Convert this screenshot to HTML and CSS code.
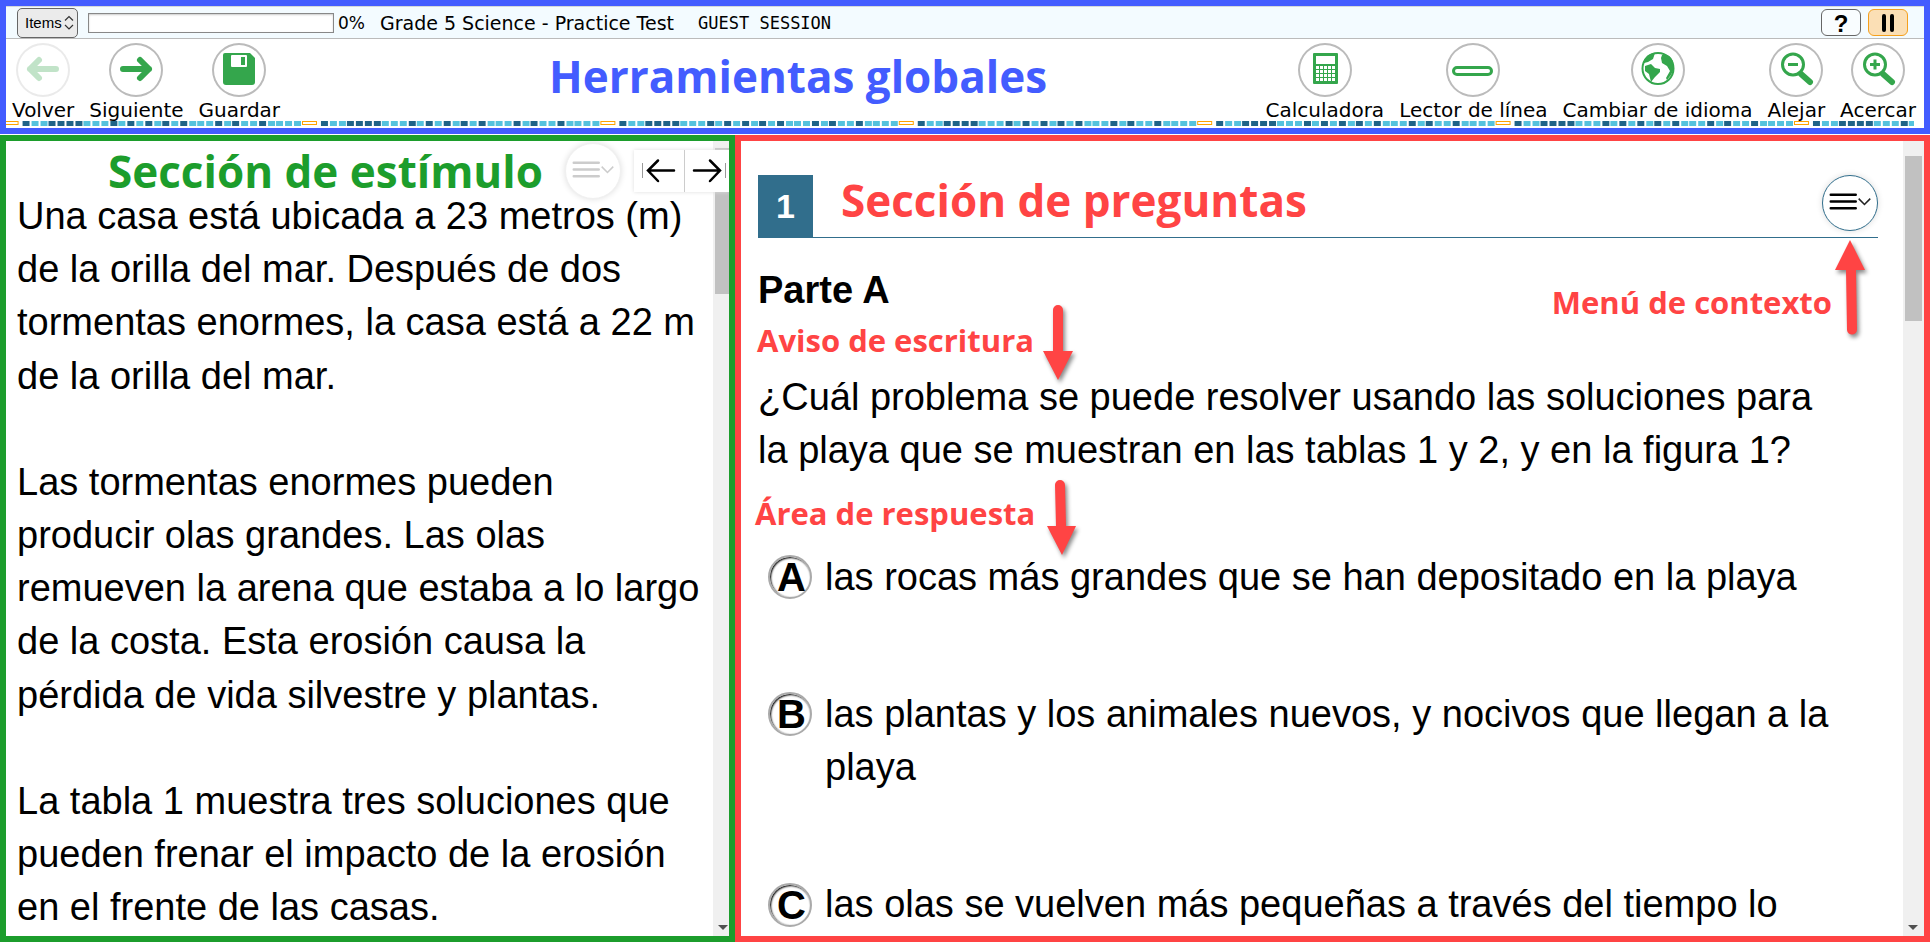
FILE: index.html
```html
<!DOCTYPE html>
<html lang="es">
<head>
<meta charset="utf-8">
<title>Grade 5 Science - Practice Test</title>
<link rel="stylesheet" href="styles.css">
</head>
<body>
<header class="global">
  <div class="status">
    <select class="items" aria-label="Items"><option>Items</option></select>
    <svg class="updown" width="10" height="16" viewBox="0 0 10 16" aria-hidden="true"><path d="M1 5.500 5 1.500 9 5.500M1 10 5 14 9 10"/></svg>
    <div class="progress" role="progressbar" aria-valuenow="0" aria-label="Progreso"></div>
    <span class="percent">0%</span>
    <span class="test-name">Grade 5 Science - Practice Test</span>
    <span class="session">GUEST SESSION</span>
    <button class="mini help" type="button">?</button>
    <button class="mini pause" type="button" aria-label="Pausa"><svg width="14" height="18" viewBox="0 0 14 18"><path d="M3 2V16M11 2V16"/></svg></button>
  </div>
  <nav class="toolbar">
    <button class="tool" type="button" disabled><span class="ring"><svg viewBox="0 0 54 54"><path class="arrow" d="M40 26H14M23 17 14 26 23 35"/></svg></span>Volver</button>
    <button class="tool" type="button"><span class="ring"><svg viewBox="0 0 54 54"><path class="arrow" d="M14 26H40M31 17 40 26 31 35"/></svg></span>Siguiente</button>
    <button class="tool" type="button"><span class="ring"><svg viewBox="0 0 54 54"><path class="fill" d="M13 10H38L43 15V39Q43 42 40 42H14Q11 42 11 39V12Q11 10 13 10Z"/><rect class="hole" x="19" y="12" width="16" height="12" rx="1"/><rect class="fill" x="29" y="14" width="4" height="8"/></svg></span>Guardar</button>
    <h1 class="global-title">Herramientas globales</h1>
    <button class="tool" type="button"><span class="ring"><svg viewBox="0 0 54 54"><rect class="fill" x="15" y="10" width="25" height="31" rx="1"/><rect class="hole" x="18" y="13" width="19" height="8"/><path class="keys" d="M18 24.500H37M18 28.500H37M18 32.500H37M18 36.500H37" stroke-dasharray="3 1"/></svg></span>Calculadora</button>
    <button class="tool" type="button"><span class="ring"><svg viewBox="0 0 54 54"><rect class="line" x="7.500" y="24.500" width="38" height="7" rx="3.500"/></svg></span>Lector de línea</button>
    <button class="tool" type="button"><span class="ring"><svg viewBox="0 0 54 54"><circle class="globe" cx="27" cy="25.500" r="15.500"/><path class="fill" d="M12 20Q15 10 24 10L22 16 17 19 13 20ZM14 23 20 21 24 25 29 26V29L24 34 20 39 18 31 14 28ZM31 12Q38 10 42 18 45 28 36 37L35 35 39 28 36 23 31 20 30 15Z"/></svg></span>Cambiar de idioma</button>
    <button class="tool" type="button"><span class="ring"><svg viewBox="0 0 54 54"><circle class="lens" cx="24" cy="21.500" r="10.500"/><path class="sign" d="M19 21.500H29"/><path class="handle" d="M32 31 41 39"/></svg></span>Alejar</button>
    <button class="tool" type="button"><span class="ring"><svg viewBox="0 0 54 54"><circle class="lens" cx="24" cy="21.500" r="10.500"/><path class="sign" d="M19 21.500H29M24 16.500V26.500"/><path class="handle" d="M32 31 41 39"/></svg></span>Acercar</button>
  </nav>
  <div class="stripe">
    <svg width="100%" height="5" aria-hidden="true">
      <defs>
        <pattern id="beads" x="-2.400" y="0" width="298.400" height="6" patternUnits="userSpaceOnUse">
          <rect class="gold" x="0.500" y="0.500" width="14" height="3"/>
          <path class="sky" d="M19 2.500H298" stroke-dasharray="7 1.750"/>
          <path class="navy" d="M19 2.500h7m19.250 0h7m1.750 0h7m1.750 0h7m1.750 0h7m28 0h7m10.500 0h7m10.500 0h7m10.500 0h7m10.500 0h7m28 0h7m10.500 0h7m19.250 0h7"/>
        </pattern>
      </defs>
      <rect width="100%" height="5" fill="url(#beads)"/>
    </svg>
  </div>
</header>

<main class="panes">
  <section class="pane stimulus">
    <div class="content">
      <h2 class="stimulus-title">Sección de estímulo</h2>
      <p>Una casa está ubicada a 23 metros (m) de la orilla del mar. Después de dos tormentas enormes, la casa está a 22 m de la orilla del mar.</p>
      <p>Las tormentas enormes pueden<br>producir olas grandes. Las olas remueven la arena que estaba a lo largo de la costa. Esta erosión causa la pérdida de vida silvestre y plantas.</p>
      <p>La tabla 1 muestra tres soluciones que pueden frenar el impacto de la erosión en el frente de las casas.</p>
    </div>
    <div class="scroll"><div class="thumb"></div><span class="down"></span></div>
    <div class="stimulus-tools">
      <button class="context faded" type="button" aria-label="Menú de contexto"><svg viewBox="0 0 56 56"><path class="bars" d="M8 19.500H34M8 26.500H34M8 33.500H34"/><path class="chev" d="M37 23.500 43 29.500 49 23.500"/></svg></button>
      <div class="resize">
        <button type="button" aria-label="Contraer"><svg viewBox="0 0 50 42"><path class="edge" d="M8.500 13V28"/><path class="move" d="M40 20.500H14M24 10.500 14 20.500 24 31"/></svg></button>
        <button type="button" aria-label="Expandir"><svg viewBox="0 0 50 42"><path class="edge" d="M40.500 13V28"/><path class="move" d="M9 20.500H35M25 10.500 35 20.500 25 31"/></svg></button>
      </div>
    </div>
  </section>

  <section class="pane questions">
    <div class="content">
      <div class="question-bar">
        <span class="number">1</span>
        <h2 class="question-title">Sección de preguntas</h2>
        <button class="context" type="button" aria-label="Menú de contexto"><svg viewBox="0 0 56 56"><path class="bars" d="M8 19.500H34M8 26.500H34M8 33.500H34"/><path class="chev" d="M37 23.500 43 29.500 49 23.500"/></svg></button>
      </div>
      <h3 class="part">Parte A</h3>
      <p class="prompt">¿Cuál problema se puede resolver usando las soluciones para la playa que se muestran en las tablas 1 y 2, y en la figura 1?</p>
      <div class="options">
        <label class="option"><span class="choice"><input type="radio" name="answer"><b>A</b></span><span>las rocas más grandes que se han depositado en la playa</span></label>
        <label class="option"><span class="choice"><input type="radio" name="answer"><b>B</b></span><span>las plantas y los animales nuevos, y nocivos que llegan a la playa</span></label>
        <label class="option"><span class="choice"><input type="radio" name="answer"><b>C</b></span><span>las olas se vuelven más pequeñas a través del tiempo lo</span></label>
      </div>
      <span class="note note-prompt">Aviso de escritura</span>
      <span class="note note-answer">Área de respuesta</span>
      <span class="note note-menu">Menú de contexto</span>
      <svg class="pointer point-prompt" width="40" height="84" viewBox="0 0 40 84"><path d="M15 6a5 5 0 0 1 10 0V47h10L20 76 5 47h10Z"/></svg>
      <svg class="pointer point-answer" width="40" height="84" viewBox="0 0 40 84"><path d="M14 6a5 5 0 0 1 10 0L25 47h10L21 76 6 47h9Z"/></svg>
      <svg class="pointer point-menu" width="40" height="110" viewBox="0 0 40 110"><path d="M19 4 34 34H25L26 93a5 5 0 0 1-10 1L15 34H4Z"/></svg>
    </div>
    <div class="scroll"><div class="thumb"></div><span class="down"></span></div>
  </section>
</main>
</body>
</html>
```
FILE: styles.css
```css
* { box-sizing: border-box; }
body {
  margin: 0;
  height: 100vh;
  display: flex;
  flex-direction: column;
  gap: 1px;
  overflow: hidden;
  background: #fff;
  color: #000;
  font-family: "Liberation Sans", Arial, sans-serif;
}
h1, h2, h3, p { margin: 0; }
button { font: inherit; color: inherit; cursor: pointer; padding: 0; }

/* Header */
.global {
  flex: none;
  border: 6px solid #435cff;
  padding-bottom: 2px;
}
.status {
  display: flex;
  align-items: center;
  height: 33px;
  padding: 0 16px 0 11px;
  border-top: 1px solid #d4d8da;
  border-bottom: 1px solid #bbb;
  background: #f3fbff;
  font: 17px "DejaVu Sans", Verdana, sans-serif;
}
.items {
  width: 61px;
  height: 30px;
  padding: 0 0 0 7px;
  appearance: none;
  border: 1px solid #666;
  border-radius: 5px;
  background: #ebebeb;
  font: 15px "Liberation Sans", Arial, sans-serif;
}
.updown { margin: 0 14px 0 -14px; pointer-events: none; }
.updown path { fill: none; stroke: #333; stroke-width: 1.2; }
.progress {
  width: 246px;
  height: 20px;
  border: 1px solid #888;
  background: #fff;
  box-shadow: inset 0 1px 2px #ccc;
}
.percent { margin-left: 4px; }
.test-name { margin-left: 15px; font-size: 19px; }
.session { margin: 0 auto 0 24px; font: 17px "DejaVu Sans Mono", monospace; }
.mini {
  display: grid;
  place-items: center;
  width: 40px;
  height: 27px;
  margin-left: 7px;
  border: 1px solid #666;
  border-radius: 6px;
  background: #f9fdff;
  font: bold 24px "Liberation Sans", Arial, sans-serif;
}
.pause { border-color: #f5a01d; background: #fbdfb5; }
.mini path { stroke: #000; stroke-width: 4; stroke-linecap: round; }

.toolbar {
  display: flex;
  gap: 15px;
  height: 82px;
  padding: 4px 8px 0 6px;
}
.tool {
  display: flex;
  flex-direction: column;
  align-items: center;
  gap: 1px;
  border: 0;
  background: none;
  font: 20px/24px "DejaVu Sans", Verdana, sans-serif;
  white-space: nowrap;
}
.tool:disabled { color: #000; }
.tool:disabled .ring { opacity: .3; }
.ring {
  width: 54px;
  height: 54px;
  border-radius: 50%;
  box-shadow: inset 0 0 0 2px #bbb;
}
.ring svg { display: block; fill: none; }
.arrow { stroke: #34a64c; stroke-width: 6; stroke-linecap: round; stroke-linejoin: round; }
.fill { fill: #34a64c; }
.hole { fill: #fff; }
.keys { stroke: #fff; stroke-width: 3; }
.line, .lens { stroke: #34a64c; stroke-width: 3; }
.globe { stroke: #34a64c; stroke-width: 2; }
.sign { stroke: #34a64c; stroke-width: 3; }
.handle { stroke: #34a64c; stroke-width: 6; stroke-linecap: round; }
.global-title {
  margin: 0 auto 0 254px;
  color: #435cff;
  font: bold 44px/66px "Open Sans", "Noto Sans", sans-serif;
  white-space: nowrap;
}
.stripe { padding-right: 10px; }
.stripe svg { display: block; shape-rendering: crispEdges; }
.gold { fill: #fff; stroke: #ffa200; }
.sky { stroke: #55c2dd; stroke-width: 5; }
.navy { stroke: #1f6388; stroke-width: 5; }

/* Panes */
.panes { flex: 1; min-height: 0; display: grid; grid-template-columns: 735fr 1195fr; }
.pane {
  position: relative;
  display: flex;
  min-width: 0;
  min-height: 0;
  overflow: hidden;
  border: 6px solid #1c9d2c;
  font-size: 38px;
  line-height: 1.4;
}
.questions { border-color: #ff4444; }
.content { flex: 1; min-width: 0; }
.scroll {
  position: relative;
  flex: none;
  width: 16px;
  background: #f0f0f0;
}
.thumb { width: 14px; height: 146px; margin: 7px 0 0 2px; background: #c1c1c1; }
.questions .scroll { width: 21px; }
.questions .thumb { width: 17px; height: 165px; margin-top: 15px; }
.down {
  position: absolute;
  right: 1px;
  bottom: 6px;
  border: 5px solid transparent;
  border-top-color: #505050;
  border-bottom: 0;
}
.questions .down { right: 6px; }

.stimulus .content { padding: 0 7px 0 11px; }
.stimulus p + p { margin-top: 53px; }
.stimulus-title {
  margin-bottom: -11px;
  padding-left: 91px;
  color: #1c9d2c;
  font: bold 44px/60px "Open Sans", "Noto Sans", sans-serif;
}
.stimulus-tools {
  position: absolute;
  top: 2px;
  right: 0;
  display: flex;
  align-items: flex-start;
  gap: 13px;
}
.context {
  flex: none;
  width: 56px;
  height: 56px;
  border: 1px solid #316e8c;
  border-radius: 50%;
  background: #fff;
  box-shadow: 0 0 6px #ddd;
}
.context svg, .resize svg { display: block; fill: none; }
.bars { stroke: #000; stroke-width: 2.5; stroke-linecap: round; }
.chev { stroke: #222; stroke-width: 1.6; }
.faded { border-color: #f0f0f0; }
.faded .bars, .faded .chev { stroke: #ccc; }
.resize { display: flex; margin-top: 7px; background: #fff; box-shadow: 0 0 4px #ddd; }
.resize button { width: 51px; height: 42px; border: 0; border-right: 1px solid #ccc; background: #fff; }
.resize button + button { width: 44px; border: 0; overflow: hidden; }
.resize svg { width: 50px; height: 42px; }
.edge { stroke: #999; }
.move { stroke: #000; stroke-width: 2.5; stroke-linecap: round; }

.questions .content { position: relative; padding: 34px 25px 0 17px; }
.question-bar {
  display: flex;
  height: 63px;
  border-bottom: 1px solid #316e8c;
}
.number {
  width: 55px;
  background: #316e8c;
  color: #fff;
  font-weight: bold;
  font-size: 34px;
  line-height: 63px;
  text-align: center;
}
.question-title {
  margin: 0 auto 0 28px;
  color: #ff4444;
  font: bold 44px/50px "Open Sans", "Noto Sans", sans-serif;
}
.part { margin-top: 26px; font-size: 38px; }
.prompt { margin-top: 54px; padding-right: 50px; }
.options { display: grid; gap: 84px; margin-top: 73px; padding-left: 10px; }
.option { display: flex; gap: 13px; padding-right: 36px; }
.choice { display: grid; flex: none; place-items: center; width: 44px; height: 53px; }
.choice input {
  grid-area: 1 / 1;
  appearance: none;
  width: 44px;
  height: 44px;
  margin: 0;
  border: 2px solid #aaa;
  border-radius: 50%;
  box-shadow: inset 1px 1px 2px #000;
}
.choice b { grid-area: 1 / 1; padding-left: 3px; font-size: 40px; line-height: 1; }

/* Callouts laid over the question */
.note {
  position: absolute;
  color: #ff4444;
  font: bold 31px/40px "Open Sans", "Noto Sans", sans-serif;
  white-space: nowrap;
}
.note-prompt { left: 16px; top: 179px; }
.note-answer { left: 14px; top: 352px; }
.note-menu { right: 71px; top: 141px; }
.pointer { position: absolute; fill: #ff4444; filter: drop-shadow(2px 3px 2px #888); }
.point-prompt { left: 297px; top: 163px; }
.point-answer { left: 300px; top: 338px; }
.point-menu { right: 32px; top: 95px; }
```
